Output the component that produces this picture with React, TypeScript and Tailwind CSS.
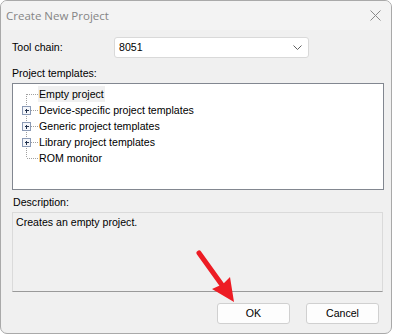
import React from 'react'

const items = [
    { label: 'Empty project', expand: false },
    { label: 'Device-specific project templates', expand: true },
    { label: 'Generic project templates', expand: true },
    { label: 'Library project templates', expand: true },
    { label: 'ROM monitor', expand: false },
]

function TreeGutter() {
    // dotted tree lines + expander boxes
    return (
        <svg width="26" height="80" className="absolute left-0 top-0" shapeRendering="crispEdges">
            <line x1="13.5" y1="10" x2="13.5" y2="74" stroke="#a0a0a0" strokeDasharray="1 1" />
            {items.map((it, i) => (
                <g key={i}>
                    <line x1="14" y1={10.5 + i * 16} x2="25" y2={10.5 + i * 16} stroke="#a0a0a0" strokeDasharray="1 1" />
                    {it.expand && (
                        <g>
                            <rect x="9.5" y={6.5 + i * 16} width="8" height="8" fill="#f4f6fa" stroke="#8b9ab5" />
                            <line x1="11.5" y1={10.5 + i * 16} x2="16" y2={10.5 + i * 16} stroke="#22324e" />
                            <line x1="13.5" y1={8.5 + i * 16} x2="13.5" y2={13 + i * 16} stroke="#22324e" />
                        </g>
                    )}
                </g>
            ))}
        </svg>
    )
}

export default function App() {
    return (
        <div
            className="relative w-[394px] h-[336px] bg-white overflow-hidden text-[10.6px] text-black"
            style={{ fontFamily: '"Liberation Sans", Arial, sans-serif' }}
        >
            <div className="w-[392px] h-[334px] rounded-[7px] border border-[#a9a9a9] bg-[#f0f0f0] flex flex-col overflow-hidden">
                {/* title bar */}
                <div className="h-[29px] bg-[#f3f3f3] flex items-center justify-between pl-[5px] pr-[10px]">
                    <span className="text-[11.5px] text-[#858585]" style={{ fontFamily: '"Open Sans", "Noto Sans", sans-serif' }}>
                        Create New Project
                    </span>
                    <svg width="11" height="11" viewBox="0 0 11 11">
                        <path d="M0.5 0.5 L10.5 10.5 M10.5 0.5 L0.5 10.5" stroke="#8a8a8a" strokeWidth="1" />
                    </svg>
                </div>

                <div className="flex flex-col px-[11px] pt-[7px]">
                    <div className="flex items-center h-[21px]">
                        <span className="w-[102px]">Tool chain:</span>
                        <div className="w-[195px] h-[21px] bg-white border border-[#d9d9d9] rounded-[3px] flex items-center justify-between pl-[4px] pr-[6px]">
                            <span>8051</span>
                            <svg width="9" height="6" viewBox="0 0 9 6">
                                <path d="M0.5 0.5 L4.5 4.5 L8.5 0.5" fill="none" stroke="#606060" />
                            </svg>
                        </div>
                    </div>

                    <div className="mt-[9px] h-[13px] leading-[13px]">Project templates:</div>
                    <div className="mt-[3px] w-[372px] h-[107px] bg-white border border-[#828790] relative">
                        <TreeGutter />
                        <div className="flex flex-col pl-[25px] pt-[2px]">
                            {items.map((it, i) => (
                                <div key={i} className="h-[16px] leading-[16px] flex">
                                    <span className={i === 0 ? 'px-[1px] bg-[#f0f0f0]' : 'px-[1px]'}>{it.label}</span>
                                </div>
                            ))}
                        </div>
                    </div>

                    <div className="mt-[6px] h-[13px] leading-[13px] ml-[1px]">Description:</div>
                    <div className="mt-[3px] w-[371px] h-[80px] border border-[#dadada] border-b-[#9a9a9a] bg-[#f0f0f0] px-[3px] pt-[2px] leading-[14px]">
                        Creates an empty project.
                    </div>

                    <div className="flex justify-end gap-[16px] mt-[11px] pr-[1px]">
                        <button className="w-[73px] h-[21px] bg-[#fdfdfd] border border-[#d0d0d0] rounded-[3px] text-[10.6px]">OK</button>
                        <button className="w-[73px] h-[21px] bg-[#fdfdfd] border border-[#d0d0d0] rounded-[3px] text-[10.6px]">Cancel</button>
                    </div>
                </div>
            </div>

            {/* red arrow pointing at OK */}
            <svg width="394" height="336" className="absolute inset-0 pointer-events-none">
                <line x1="199" y1="253" x2="222" y2="285" stroke="#ed1c24" strokeWidth="5" strokeLinecap="round" />
                <path d="M234 302 L212 289 L223 284 L230 277 Z" fill="#ed1c24" />
            </svg>
        </div>
    )
}
